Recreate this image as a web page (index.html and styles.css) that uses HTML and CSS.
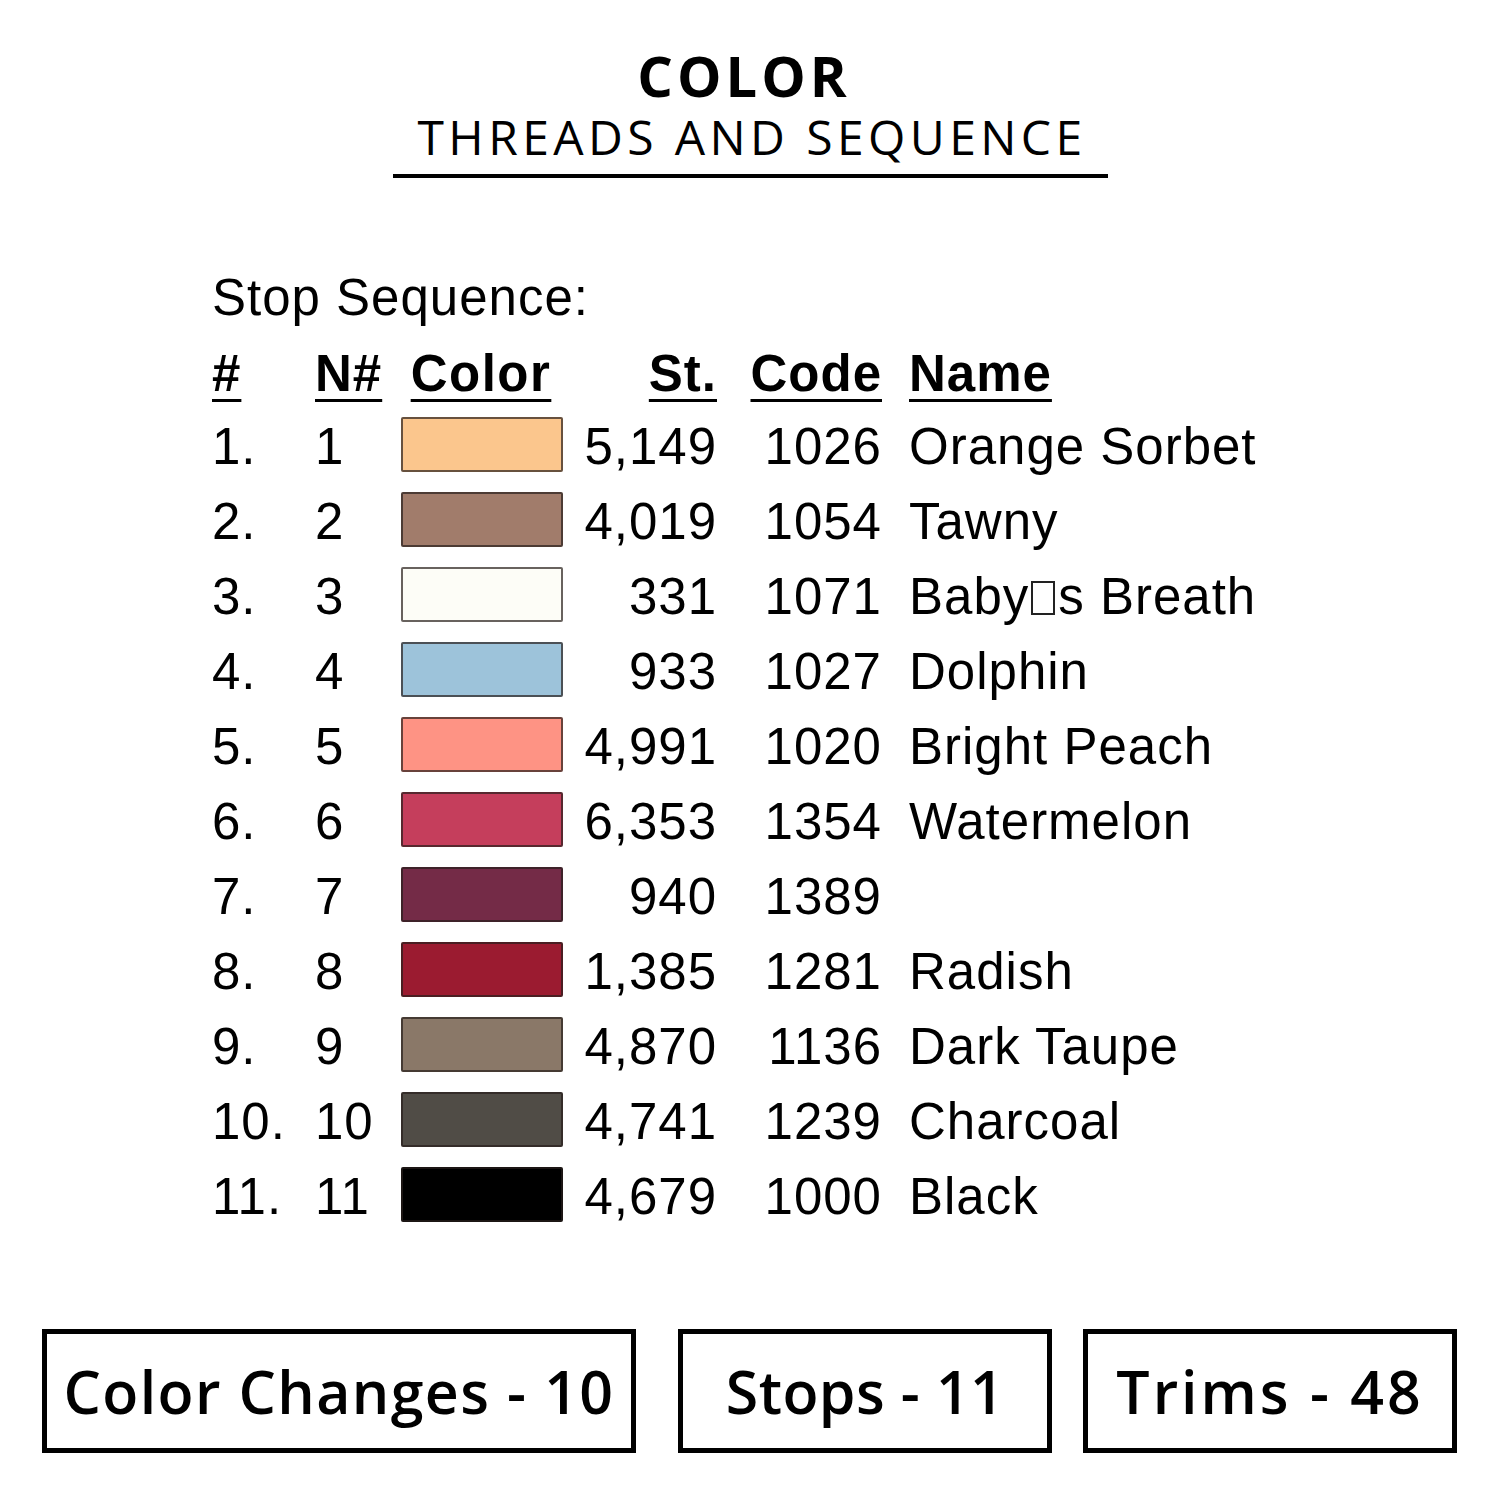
FILE: index.html
```html
<!DOCTYPE html>
<html lang="en">
<head>
<meta charset="utf-8">
<title>Color Threads and Sequence</title>
<link rel="stylesheet" href="styles.css">
</head>
<body>
<div class="page">
  <header class="title">
    <h1 class="title-main">COLOR</h1>
    <div class="title-sub"><span>THREADS AND SEQUENCE</span></div>
  </header>

  <section class="sequence">
    <div class="seq-label">Stop Sequence:</div>
    <div class="seq-table">
      <div class="row head">
        <span class="c-num">#</span>
        <span class="c-n">N#</span>
        <span class="c-color">Color</span>
        <span class="c-st">St.</span>
        <span class="c-code">Code</span>
        <span class="c-name">Name</span>
      </div>
      <div class="row">
        <span class="c-num">1.</span><span class="c-n">1</span>
        <span class="c-color"><i class="swatch" style="background:#fbc68d"></i></span>
        <span class="c-st">5,149</span><span class="c-code">1026</span><span class="c-name">Orange Sorbet</span>
      </div>
      <div class="row">
        <span class="c-num">2.</span><span class="c-n">2</span>
        <span class="c-color"><i class="swatch" style="background:#a17c6b"></i></span>
        <span class="c-st">4,019</span><span class="c-code">1054</span><span class="c-name">Tawny</span>
      </div>
      <div class="row">
        <span class="c-num">3.</span><span class="c-n">3</span>
        <span class="c-color"><i class="swatch" style="background:#fdfdf7"></i></span>
        <span class="c-st">331</span><span class="c-code">1071</span><span class="c-name">Baby<span class="tofu"></span>s Breath</span>
      </div>
      <div class="row">
        <span class="c-num">4.</span><span class="c-n">4</span>
        <span class="c-color"><i class="swatch" style="background:#9dc3da"></i></span>
        <span class="c-st">933</span><span class="c-code">1027</span><span class="c-name">Dolphin</span>
      </div>
      <div class="row">
        <span class="c-num">5.</span><span class="c-n">5</span>
        <span class="c-color"><i class="swatch" style="background:#fe9384"></i></span>
        <span class="c-st">4,991</span><span class="c-code">1020</span><span class="c-name">Bright Peach</span>
      </div>
      <div class="row">
        <span class="c-num">6.</span><span class="c-n">6</span>
        <span class="c-color"><i class="swatch" style="background:#c53e5c"></i></span>
        <span class="c-st">6,353</span><span class="c-code">1354</span><span class="c-name">Watermelon</span>
      </div>
      <div class="row">
        <span class="c-num">7.</span><span class="c-n">7</span>
        <span class="c-color"><i class="swatch" style="background:#742b47"></i></span>
        <span class="c-st">940</span><span class="c-code">1389</span><span class="c-name"></span>
      </div>
      <div class="row">
        <span class="c-num">8.</span><span class="c-n">8</span>
        <span class="c-color"><i class="swatch" style="background:#9b1b30"></i></span>
        <span class="c-st">1,385</span><span class="c-code">1281</span><span class="c-name">Radish</span>
      </div>
      <div class="row">
        <span class="c-num">9.</span><span class="c-n">9</span>
        <span class="c-color"><i class="swatch" style="background:#8a7868"></i></span>
        <span class="c-st">4,870</span><span class="c-code">1136</span><span class="c-name">Dark Taupe</span>
      </div>
      <div class="row">
        <span class="c-num">10.</span><span class="c-n">10</span>
        <span class="c-color"><i class="swatch" style="background:#504c46"></i></span>
        <span class="c-st">4,741</span><span class="c-code">1239</span><span class="c-name">Charcoal</span>
      </div>
      <div class="row">
        <span class="c-num">11.</span><span class="c-n">11</span>
        <span class="c-color"><i class="swatch" style="background:#000000"></i></span>
        <span class="c-st">4,679</span><span class="c-code">1000</span><span class="c-name">Black</span>
      </div>
    </div>
  </section>

  <section class="stats">
    <div class="stat stat-wide">Color Changes - 10</div>
    <div class="stat stat-mid">Stops - 11</div>
    <div class="stat stat-end">Trims - 48</div>
  </section>
</div>
</body>
</html>
```

FILE: styles.css
```css
html, body {
  margin: 0;
  padding: 0;
  background: #ffffff;
}

.page {
  width: 1500px;
  height: 1500px;
  color: #000;
  overflow: hidden;
}

/* ---------- Title ---------- */
.title {
  padding-top: 45px;
  display: flex;
  flex-direction: column;
  align-items: center;
  font-family: "Open Sans", "DejaVu Sans", sans-serif;
}

.title-main {
  margin: 0 0 0 -12px;
  font-size: 56px;
  line-height: 60px;
  font-weight: 700;
  letter-spacing: 4px;
}

.title-sub {
  margin-top: 6px;
  width: 715px;
  padding-bottom: 11px;
  border-bottom: 4px solid #000;
  text-align: center;
  font-size: 48px;
  line-height: 52px;
  font-weight: 400;
  letter-spacing: 4.4px;
}

.title-sub span {
  margin-right: -4px;
}

/* ---------- Sequence table ---------- */
.sequence {
  margin-top: 90px;
  padding-left: 212px;
  font-family: "Liberation Sans", Arial, sans-serif;
  font-size: 51px;
  letter-spacing: 1px;
}

.seq-label {
  height: 60px;
  line-height: 60px;
}

.seq-table {
  margin-top: 11px;
}

.row {
  display: grid;
  grid-template-columns: 103px 86px 162px 154px 163px 1fr;
  align-items: center;
  height: 75px;
  line-height: 60px;
  white-space: nowrap;
}

.row.head {
  height: 70px;
  font-weight: 700;
}

.row.head > span {
  text-decoration: underline;
  text-decoration-thickness: 3px;
  text-underline-offset: 8px;
}

.row.head .c-color {
  justify-content: center;
  padding-right: 2px;
  letter-spacing: 1.5px;
}

.c-st,
.c-code {
  text-align: right;
}

.c-code {
  margin-right: -2px;
}

.c-name {
  padding-left: 29px;
}

.row.head .c-name {
  margin-left: 29px;
  padding-left: 0;
  justify-self: start;
}

.c-color {
  display: flex;
  align-items: center;
}

.swatch {
  display: block;
  width: 162px;
  height: 55px;
  box-sizing: border-box;
  border: 2px solid rgba(40, 32, 28, 0.7);
  border-radius: 2px;
  margin-top: -4px;
}

.tofu {
  display: inline-block;
  width: 24px;
  height: 34px;
  box-sizing: border-box;
  border: 2px solid #222;
  margin: 0 3px 0 2px;
  vertical-align: -1px;
}

/* ---------- Stats boxes ---------- */
.stats {
  margin-top: 95px;
  padding-left: 42px;
  display: flex;
  font-family: "Open Sans", "DejaVu Sans", sans-serif;
  font-weight: 600;
  font-size: 59px;
}

.stat {
  box-sizing: border-box;
  height: 124px;
  border: 5px solid #000;
  display: flex;
  align-items: center;
  justify-content: center;
  white-space: nowrap;
}

.stat-wide {
  width: 594px;
  letter-spacing: 1.4px;
}

.stat-mid {
  width: 374px;
  margin-left: 42px;
  letter-spacing: 0.4px;
}

.stat-end {
  width: 374px;
  margin-left: 31px;
  letter-spacing: 3px;
}
```
